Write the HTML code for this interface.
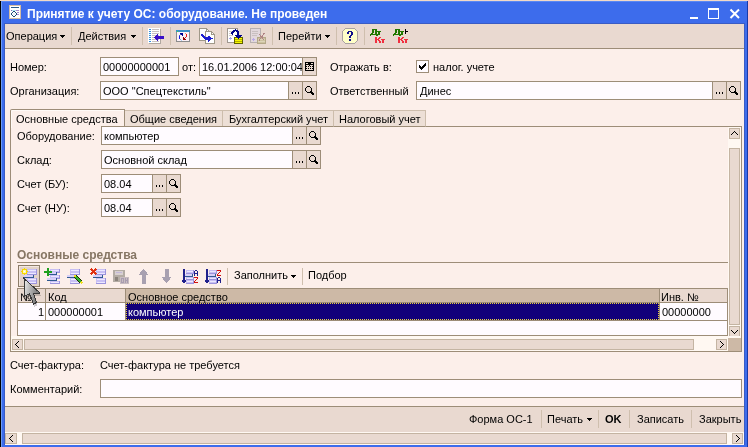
<!DOCTYPE html>
<html><head><meta charset="utf-8">
<style>
*{box-sizing:border-box;margin:0;padding:0}
html,body{width:748px;height:447px;overflow:hidden;background:#3d6cec}
body{position:relative;font:11px "Liberation Sans",sans-serif;color:#000}
.a{position:absolute}
.t{will-change:transform;position:absolute;white-space:nowrap;line-height:13px;height:13px}
.inp{position:absolute;background:#fffbff;border:1px solid #9d8d78}
.btn{position:absolute;background:#e9d9d0;border:1px solid #9d8d78}
.sb{position:absolute;background:#e9d9d0;border:1px solid #c4b4a2}
.sep{position:absolute;width:1px;background:#cfbfae}
.dots{position:absolute;left:3px;top:9px;width:9px;height:2px;background:
 linear-gradient(90deg,#000 0 2px,transparent 2px 3.5px,#000 3.5px 5.5px,transparent 5.5px 7px,#000 7px 9px)}
</style></head><body>
<!-- window frame -->
<div class="a" style="left:0;top:0;width:748px;height:1px;background:#f3d9c6"></div>
<div class="a" style="left:0;top:1px;width:1px;height:446px;background:#000"></div>
<div class="a" style="left:1px;top:1px;width:1px;height:446px;background:#6e9cf2"></div>
<div class="a" style="left:1px;top:1px;width:746px;height:1px;background:#5a88f4"></div>
<div class="a" style="left:747px;top:1px;width:1px;height:446px;background:#1a3aa8"></div>
<!-- title -->
<div class="t" style="left:27px;top:7px;font-weight:bold;font-size:12px;color:#fff;line-height:15px;height:15px">Принятие к учету ОС: оборудование. Не проведен</div>
<div class="a" style="left:690px;top:17px;width:8px;height:2px;background:#fff"></div>
<div class="a" style="left:708px;top:8px;width:11px;height:11px;border:1px solid #fff;border-top-width:2px"></div>
<svg class="a" style="left:729px;top:8px" width="12" height="12"><path d="M1.5 1.5L10 10M10 1.5L1.5 10" stroke="#fff" stroke-width="2"/></svg>
<!-- content -->
<div class="a" style="left:4px;top:23px;width:741px;height:422px;background:#3a5cc4"></div>
<div class="a" style="left:5px;top:24px;width:739px;height:421px;background:#fcefea"></div>
<!-- toolbar -->
<div class="a" style="left:5px;top:24px;width:739px;height:25px;background:#e9d9d0;border-bottom:1px solid #9d8d78"></div>
<div class="t" style="left:6px;top:30px">Операция</div>
<div class="t" style="left:78px;top:30px">Действия</div>
<div class="t" style="left:278px;top:30px">Перейти</div>
<div class="sep" style="left:71px;top:27px;height:18px"></div>
<div class="sep" style="left:142px;top:27px;height:18px"></div>
<div class="sep" style="left:170px;top:27px;height:18px"></div>
<div class="sep" style="left:221px;top:27px;height:18px"></div>
<div class="sep" style="left:272px;top:27px;height:18px"></div>
<div class="sep" style="left:336px;top:27px;height:18px"></div>
<div class="sep" style="left:364px;top:27px;height:18px"></div>

<!-- form rows -->
<div class="t" style="left:10px;top:61px">Номер:</div>
<div class="inp" style="left:100px;top:57px;width:79px;height:19px"></div>
<div class="t" style="left:103px;top:61px">00000000001</div>
<div class="t" style="left:182px;top:61px">от:</div>
<div class="inp" style="left:199px;top:57px;width:118px;height:19px;overflow:hidden"><div class="t" style="left:2px;top:3px">16.01.2006 12:00:04</div></div>
<div class="btn" style="left:302px;top:57px;width:15px;height:19px"></div>
<div class="t" style="left:330px;top:61px">Отражать в:</div>
<div class="inp" style="left:416px;top:60px;width:13px;height:13px"></div>
<div class="t" style="left:433px;top:61px">налог. учете</div>

<div class="t" style="left:10px;top:85px">Организация:</div>
<div class="inp" style="left:100px;top:81px;width:217px;height:19px"></div>
<div class="t" style="left:103px;top:85px">ООО "Спецтекстиль"</div>
<div class="btn" style="left:288px;top:81px;width:15px;height:19px"></div>
<div class="btn" style="left:302px;top:81px;width:15px;height:19px"></div>
<div class="t" style="left:330px;top:85px">Ответственный</div>
<div class="inp" style="left:416px;top:81px;width:325px;height:19px"></div>
<div class="t" style="left:420px;top:85px">Динес</div>
<div class="btn" style="left:712px;top:81px;width:15px;height:19px"></div>
<div class="btn" style="left:726px;top:81px;width:15px;height:19px"></div>

<!-- tabs -->
<div class="a" style="left:10px;top:126px;width:732px;height:226px;border:1px solid #9d8d78"></div>
<div class="a" style="left:124px;top:110px;width:99px;height:17px;background:#eddfd6;border:1px solid #cdbdac;border-bottom-color:#9d8d78"></div>
<div class="a" style="left:222px;top:110px;width:112px;height:17px;background:#eddfd6;border:1px solid #cdbdac;border-bottom-color:#9d8d78"></div>
<div class="a" style="left:333px;top:110px;width:93px;height:17px;background:#eddfd6;border:1px solid #cdbdac;border-bottom-color:#9d8d78"></div>
<div class="a" style="left:10px;top:109px;width:115px;height:19px;background:#fcefea;border:1px solid #9d8d78;border-bottom:none;border-top-left-radius:2px;box-shadow:inset 1px 1px 0 #fffaf7"></div>
<div class="t" style="left:16px;top:113px">Основные средства</div>
<div class="t" style="left:130px;top:113px">Общие сведения</div>
<div class="t" style="left:229px;top:113px">Бухгалтерский учет</div>
<div class="t" style="left:339px;top:113px">Налоговый учет</div>

<div class="t" style="left:17px;top:130px">Оборудование:</div>
<div class="inp" style="left:101px;top:126px;width:220px;height:19px"></div>
<div class="t" style="left:104px;top:130px">компьютер</div>
<div class="btn" style="left:292px;top:126px;width:15px;height:19px"></div>
<div class="btn" style="left:306px;top:126px;width:15px;height:19px"></div>

<div class="t" style="left:17px;top:154px">Склад:</div>
<div class="inp" style="left:101px;top:150px;width:220px;height:19px"></div>
<div class="t" style="left:104px;top:154px">Основной склад</div>
<div class="btn" style="left:292px;top:150px;width:15px;height:19px"></div>
<div class="btn" style="left:306px;top:150px;width:15px;height:19px"></div>

<div class="t" style="left:17px;top:178px">Счет (БУ):</div>
<div class="inp" style="left:101px;top:174px;width:80px;height:19px"></div>
<div class="t" style="left:104px;top:178px">08.04</div>
<div class="btn" style="left:152px;top:174px;width:15px;height:19px"></div>
<div class="btn" style="left:166px;top:174px;width:15px;height:19px"></div>

<div class="t" style="left:17px;top:202px">Счет (НУ):</div>
<div class="inp" style="left:101px;top:198px;width:80px;height:19px"></div>
<div class="t" style="left:104px;top:202px">08.04</div>
<div class="btn" style="left:152px;top:198px;width:15px;height:19px"></div>
<div class="btn" style="left:166px;top:198px;width:15px;height:19px"></div>

<div class="t" style="left:17px;top:249px;font-weight:bold;font-size:12px;color:#867664">Основные средства</div>
<div class="a" style="left:17px;top:262px;width:711px;height:1px;background:#9d8d78"></div>

<!-- grid toolbar -->
<div class="a" style="left:18px;top:265px;width:22px;height:22px;background:#e3d3c9;border:1px solid #8c7c68;box-shadow:inset 1px 1px 0 #f4e8e0"></div>
<div class="sep" style="left:227px;top:268px;height:17px"></div>
<div class="sep" style="left:302px;top:268px;height:17px"></div>
<div class="t" style="left:234px;top:269px">Заполнить</div>
<div class="t" style="left:308px;top:269px">Подбор</div>

<!-- grid -->
<div class="a" style="left:17px;top:288px;width:711px;height:48px;background:#fffbff;border:1px solid #9d8d78"></div>
<div class="a" style="left:18px;top:289px;width:709px;height:14px;background:#e9d9d0;border-bottom:1px solid #9d8d78"></div>
<div class="a" style="left:126px;top:289px;width:533px;height:14px;background:#cdb9a6;border-bottom:1px solid #9d8d78"></div>
<div class="a" style="left:45px;top:289px;width:1px;height:31px;background:#9d8d78"></div>
<div class="a" style="left:125px;top:289px;width:1px;height:31px;background:#9d8d78"></div>
<div class="a" style="left:659px;top:289px;width:1px;height:31px;background:#9d8d78"></div>
<div class="a" style="left:18px;top:320px;width:709px;height:1px;background:#9d8d78"></div>
<div class="a" style="left:126px;top:303px;width:533px;height:17px;background:#12007a;border:1px dotted #e8d040"></div>
<div class="t" style="left:20px;top:291px">№</div>
<div class="t" style="left:48px;top:291px">Код</div>
<div class="t" style="left:128px;top:291px">Основное средство</div>
<div class="t" style="left:661px;top:291px">Инв. №</div>
<div class="t" style="left:38px;top:306px">1</div>
<div class="t" style="left:48px;top:306px">000000001</div>
<div class="t" style="left:128px;top:306px;color:#fff">компьютер</div>
<div class="t" style="left:662px;top:306px">00000000</div>

<!-- panel scrollbars -->
<div class="a" style="left:728px;top:127px;width:13px;height:224px;background:#fff8f2"></div>
<div class="sb" style="left:729px;top:128px;width:11px;height:11px"></div>
<div class="sb" style="left:729px;top:148px;width:11px;height:177px"></div>
<div class="sb" style="left:729px;top:326px;width:11px;height:11px"></div>
<div class="a" style="left:11px;top:336px;width:730px;height:15px;background:#fff8f2"></div>
<div class="sb" style="left:12px;top:339px;width:11px;height:11px"></div>
<div class="sb" style="left:24px;top:339px;width:670px;height:11px"></div>
<div class="sb" style="left:716px;top:339px;width:11px;height:11px"></div>
<div class="a" style="left:728px;top:338px;width:13px;height:13px;background:#cdb9a6"></div>

<!-- bottom -->
<div class="t" style="left:10px;top:359px">Счет-фактура:</div>
<div class="t" style="left:100px;top:359px">Счет-фактура не требуется</div>
<div class="t" style="left:10px;top:383px">Комментарий:</div>
<div class="inp" style="left:100px;top:379px;width:642px;height:19px"></div>

<div class="a" style="left:5px;top:406px;width:739px;height:39px;background:#e9d9d0;border-top:1px solid #9d8d78"></div>
<div class="t" style="left:469px;top:413px">Форма ОС-1</div>
<div class="t" style="left:547px;top:413px">Печать</div>
<div class="t" style="left:605px;top:413px;font-weight:bold">OK</div>
<div class="t" style="left:637px;top:413px">Записать</div>
<div class="t" style="left:699px;top:413px">Закрыть</div>
<div class="sep" style="left:541px;top:410px;height:18px"></div>
<div class="sep" style="left:598px;top:410px;height:18px"></div>
<div class="sep" style="left:629px;top:410px;height:18px"></div>
<div class="sep" style="left:691px;top:410px;height:18px"></div>
<div class="a" style="left:5px;top:432px;width:739px;height:13px;background:#fff8f2"></div>
<div class="sb" style="left:5px;top:433px;width:12px;height:11px"></div>
<div class="sb" style="left:22px;top:433px;width:705px;height:11px"></div>
<div class="sb" style="left:732px;top:433px;width:11px;height:11px"></div>
<!-- ICONS -->
<svg class="a" style="left:0;top:0" width="748" height="447" viewBox="0 0 748 447">
<g shape-rendering="crispEdges">
<!-- title icon -->
<g shape-rendering="crispEdges">
<rect x="9" y="5" width="12" height="14" fill="#d4bca4"/>
<rect x="10" y="6" width="10" height="12" fill="#fff"/>
<rect x="11" y="7" width="8" height="1" fill="#2a5a8a"/>
<rect x="11" y="10" width="1" height="1" fill="#8060c0"/>
<rect x="12" y="10" width="4" height="1" fill="#b0e8f0"/>
<rect x="16" y="10" width="3" height="1" fill="#a888d0"/>
<rect x="17" y="12" width="2" height="1" fill="#a888d0"/>
<rect x="17" y="14" width="2" height="1" fill="#a888d0"/>
<rect x="13" y="13" width="2" height="2" fill="#e8f0f8"/>
<rect x="13" y="11" width="1" height="1" fill="#1e4a7a"/><rect x="14" y="11" width="1" height="1" fill="#1e4a7a"/><rect x="12" y="12" width="1" height="1" fill="#1e4a7a"/><rect x="15" y="12" width="1" height="1" fill="#1e4a7a"/><rect x="11" y="13" width="1" height="1" fill="#1e4a7a"/><rect x="16" y="13" width="1" height="1" fill="#1e4a7a"/><rect x="11" y="14" width="1" height="1" fill="#1e4a7a"/><rect x="16" y="14" width="1" height="1" fill="#1e4a7a"/><rect x="12" y="15" width="1" height="1" fill="#1e4a7a"/><rect x="15" y="15" width="1" height="1" fill="#1e4a7a"/><rect x="13" y="16" width="1" height="1" fill="#1e4a7a"/><rect x="14" y="16" width="1" height="1" fill="#1e4a7a"/>
</g>
<!-- dropdown arrows -->
<g fill="#000" shape-rendering="crispEdges">
<path d="M60 35h5v1h-1v1h-1v1h-1v-1h-1v-1h-1z"/>
<path d="M131 35h5v1h-1v1h-1v1h-1v-1h-1v-1h-1z"/>
<path d="M325 35h5v1h-1v1h-1v1h-1v-1h-1v-1h-1z"/>
<path d="M291 275h5v1h-1v1h-1v1h-1v-1h-1v-1h-1z"/>
<path d="M587 418h5v1h-1v1h-1v1h-1v-1h-1v-1h-1z"/>
</g>

<!-- toolbar icon 1: doc with left arrow -->
<g shape-rendering="crispEdges">
<rect x="149" y="29" width="12" height="15" fill="#b0a8a0"/>
<rect x="148" y="28" width="12" height="15" fill="#fff"/>
<g fill="#3090e0"><rect x="149" y="29" width="2" height="1"/><rect x="149" y="31" width="2" height="1"/><rect x="149" y="33" width="2" height="1"/><rect x="149" y="35" width="2" height="1"/><rect x="149" y="37" width="2" height="1"/><rect x="149" y="39" width="2" height="1"/><rect x="149" y="41" width="2" height="1"/></g>
<g fill="#c8c0c0"><rect x="152" y="29" width="7" height="1"/><rect x="152" y="31" width="7" height="1"/><rect x="152" y="33" width="7" height="1"/><rect x="152" y="35" width="7" height="1"/><rect x="152" y="37" width="7" height="1"/><rect x="152" y="39" width="7" height="1"/><rect x="152" y="41" width="7" height="1"/></g>
</g>
<path d="M153.5 37.5 L158 33.5 V36 H164 V39.3 H158 V41.5 Z" fill="#3a10c8"/>

<!-- toolbar icon 2: refresh window -->
<g shape-rendering="crispEdges">
<rect x="176" y="30" width="14" height="12" fill="#8c8c8c"/>
<rect x="177" y="32" width="12" height="9" fill="#fbf0f6"/>
<rect x="176" y="30" width="14" height="2" fill="#3c90c8"/>
<rect x="177" y="31" width="1" height="1" fill="#40e040"/>
<rect x="180" y="33" width="1" height="1" fill="#000090"/><rect x="181" y="33" width="1" height="1" fill="#000090"/><rect x="182" y="33" width="1" height="1" fill="#000090"/><rect x="181" y="34" width="1" height="1" fill="#000090"/><rect x="182" y="34" width="1" height="1" fill="#000090"/><rect x="182" y="35" width="1" height="1" fill="#000090"/><rect x="180" y="34" width="1" height="1" fill="#4060b0"/><rect x="179" y="35" width="1" height="1" fill="#4070c0"/><rect x="179" y="36" width="1" height="1" fill="#1818e8"/><rect x="179" y="37" width="1" height="1" fill="#1818e8"/><rect x="179" y="38" width="1" height="1" fill="#1818e8"/><rect x="180" y="39" width="1" height="1" fill="#60a8d8"/><rect x="181" y="40" width="1" height="1" fill="#b0d0f0"/><rect x="185" y="33" width="1" height="1" fill="#f0a070"/><rect x="186" y="34" width="1" height="1" fill="#f01818"/><rect x="186" y="35" width="1" height="1" fill="#f01818"/><rect x="186" y="36" width="1" height="1" fill="#f01818"/><rect x="185" y="37" width="1" height="1" fill="#b03030"/><rect x="183" y="37" width="1" height="1" fill="#900000"/><rect x="183" y="38" width="1" height="1" fill="#900000"/><rect x="183" y="39" width="1" height="1" fill="#900000"/><rect x="184" y="38" width="1" height="1" fill="#900000"/><rect x="184" y="39" width="1" height="1" fill="#900000"/><rect x="185" y="39" width="1" height="1" fill="#900000"/>
</g>
<!-- toolbar icon 3: two docs -->
<path d="M199.5 28.5 H206.5 L209.5 31.5 V40.5 H199.5 Z" fill="#fff" stroke="#a09888"/>
<path d="M206.5 28.5 V31.5 H209.5" fill="none" stroke="#a09888"/>
<path d="M205.5 31.5 H211.5 L214.5 34.5 V43.5 H205.5 Z" fill="#fff" stroke="#a09888"/>
<path d="M211.5 31.5 V34.5 H214.5" fill="none" stroke="#a09888"/>
<g fill="#2020d0" shape-rendering="crispEdges"><rect x="201" y="34" width="2" height="1"/><rect x="201" y="35" width="3" height="1"/><rect x="202" y="36" width="3" height="1"/><rect x="208" y="36" width="2" height="1"/><rect x="203" y="37" width="8" height="1"/><rect x="204" y="38" width="9" height="1"/><rect x="205" y="39" width="6" height="1"/><rect x="208" y="40" width="2" height="1"/><rect x="208" y="41" width="1" height="1"/></g>
<!-- toolbar icon 4: doc + arrow + yellow box -->
<g shape-rendering="crispEdges">
<rect x="227" y="28" width="11" height="15" fill="#a09890"/>
<rect x="228" y="29" width="9" height="13" fill="#fff"/>
<rect x="229" y="31" width="5" height="1" fill="#d0c8c8"/><rect x="229" y="33" width="3" height="1" fill="#d0c8c8"/><rect x="229" y="35" width="4" height="1" fill="#d0c8c8"/>
<rect x="230" y="37" width="1" height="2" fill="#a8a0f0"/><rect x="229" y="38" width="3" height="1" fill="#a8a0f0"/><rect x="230" y="39" width="1" height="1" fill="#c8c0f8"/>
<rect x="234" y="37" width="9" height="7" fill="#606000"/>
<rect x="235" y="38" width="7" height="1" fill="#f8f800"/><rect x="235" y="40" width="7" height="1" fill="#f8f800"/><rect x="235" y="42" width="7" height="1" fill="#f8f800"/>
<rect x="235" y="39" width="7" height="1" fill="#b0b000"/><rect x="235" y="41" width="7" height="1" fill="#b0b000"/>
</g>
<path d="M231.5 34.5 Q233 30 236 30.5 Q238.5 31 238.5 35" fill="none" stroke="#00008c" stroke-width="2"/>
<path d="M235 35 H242 L238.5 39 Z" fill="#00008c"/>
<!-- toolbar icon 5: disabled -->
<g shape-rendering="crispEdges">
<rect x="250" y="28" width="11" height="15" fill="#b8b0b0"/>
<rect x="251" y="29" width="9" height="13" fill="#e2d8dc"/>
<rect x="252" y="31" width="6" height="1" fill="#c8c0c0"/><rect x="252" y="33" width="6" height="1" fill="#c8c0c0"/><rect x="252" y="35" width="5" height="1" fill="#c8c0c0"/>
<rect x="253" y="38" width="1" height="3" fill="#b8a8e8"/><rect x="252" y="39" width="3" height="1" fill="#b8a8e8"/>
<rect x="257" y="37" width="9" height="7" fill="#b4a888"/>
<rect x="258" y="38" width="7" height="5" fill="#cdc2a0"/>
<rect x="258" y="39" width="7" height="1" fill="#dcd4b8"/><rect x="258" y="41" width="7" height="1" fill="#dcd4b8"/>
</g>
<path d="M259 34 L264 40 M264.5 33 L259 40.5" stroke="#b08484" stroke-width="1.1"/>
<!-- help -->
<path d="M345.5 28.5 H354.5 L357.5 31.5 V40.5 L354.5 43.5 H345.5 L342.5 40.5 V31.5 Z" fill="#ffffc8" stroke="#aaa2a2"/>
<g fill="#10108c" shape-rendering="crispEdges"><rect x="348" y="31" width="1" height="1"/><rect x="349" y="31" width="1" height="1"/><rect x="350" y="31" width="1" height="1"/><rect x="351" y="31" width="1" height="1"/><rect x="347" y="32" width="1" height="1"/><rect x="348" y="32" width="1" height="1"/><rect x="351" y="32" width="1" height="1"/><rect x="352" y="32" width="1" height="1"/><rect x="347" y="33" width="1" height="1"/><rect x="348" y="33" width="1" height="1"/><rect x="351" y="33" width="1" height="1"/><rect x="352" y="33" width="1" height="1"/><rect x="351" y="34" width="1" height="1"/><rect x="352" y="34" width="1" height="1"/><rect x="350" y="35" width="1" height="1"/><rect x="351" y="35" width="1" height="1"/><rect x="349" y="36" width="1" height="1"/><rect x="350" y="36" width="1" height="1"/><rect x="349" y="37" width="1" height="1"/><rect x="350" y="37" width="1" height="1"/><rect x="349" y="39" width="1" height="1"/><rect x="350" y="39" width="1" height="1"/><rect x="349" y="40" width="1" height="1"/><rect x="350" y="40" width="1" height="1"/></g>
<!-- Dt Kt -->
<g fill="#207800" shape-rendering="crispEdges"><rect x="372" y="29" width="1" height="1"/><rect x="373" y="29" width="1" height="1"/><rect x="374" y="29" width="1" height="1"/><rect x="375" y="29" width="1" height="1"/><rect x="376" y="29" width="1" height="1"/><rect x="372" y="30" width="1" height="1"/><rect x="373" y="30" width="1" height="1"/><rect x="375" y="30" width="1" height="1"/><rect x="376" y="30" width="1" height="1"/><rect x="372" y="31" width="1" height="1"/><rect x="373" y="31" width="1" height="1"/><rect x="375" y="31" width="1" height="1"/><rect x="376" y="31" width="1" height="1"/><rect x="372" y="32" width="1" height="1"/><rect x="373" y="32" width="1" height="1"/><rect x="375" y="32" width="1" height="1"/><rect x="376" y="32" width="1" height="1"/><rect x="371" y="33" width="1" height="1"/><rect x="372" y="33" width="1" height="1"/><rect x="375" y="33" width="1" height="1"/><rect x="376" y="33" width="1" height="1"/><rect x="370" y="34" width="1" height="1"/><rect x="371" y="34" width="1" height="1"/><rect x="372" y="34" width="1" height="1"/><rect x="373" y="34" width="1" height="1"/><rect x="374" y="34" width="1" height="1"/><rect x="375" y="34" width="1" height="1"/><rect x="376" y="34" width="1" height="1"/><rect x="377" y="34" width="1" height="1"/><rect x="370" y="35" width="1" height="1"/><rect x="376" y="35" width="1" height="1"/><rect x="377" y="35" width="1" height="1"/></g><g fill="#207800" shape-rendering="crispEdges"><rect x="377" y="31" width="1" height="1"/><rect x="378" y="31" width="1" height="1"/><rect x="379" y="31" width="1" height="1"/><rect x="380" y="31" width="1" height="1"/><rect x="378" y="32" width="1" height="1"/><rect x="379" y="32" width="1" height="1"/><rect x="378" y="33" width="1" height="1"/><rect x="379" y="33" width="1" height="1"/><rect x="378" y="34" width="1" height="1"/><rect x="379" y="34" width="1" height="1"/></g><g fill="#f03040" shape-rendering="crispEdges"><rect x="375" y="37" width="1" height="1"/><rect x="376" y="37" width="1" height="1"/><rect x="379" y="37" width="1" height="1"/><rect x="380" y="37" width="1" height="1"/><rect x="375" y="38" width="1" height="1"/><rect x="376" y="38" width="1" height="1"/><rect x="378" y="38" width="1" height="1"/><rect x="379" y="38" width="1" height="1"/><rect x="375" y="39" width="1" height="1"/><rect x="376" y="39" width="1" height="1"/><rect x="377" y="39" width="1" height="1"/><rect x="378" y="39" width="1" height="1"/><rect x="375" y="40" width="1" height="1"/><rect x="376" y="40" width="1" height="1"/><rect x="378" y="40" width="1" height="1"/><rect x="379" y="40" width="1" height="1"/><rect x="375" y="41" width="1" height="1"/><rect x="376" y="41" width="1" height="1"/><rect x="379" y="41" width="1" height="1"/><rect x="380" y="41" width="1" height="1"/><rect x="375" y="42" width="1" height="1"/><rect x="376" y="42" width="1" height="1"/><rect x="379" y="42" width="1" height="1"/><rect x="380" y="42" width="1" height="1"/></g><g fill="#f03040" shape-rendering="crispEdges"><rect x="381" y="39" width="1" height="1"/><rect x="382" y="39" width="1" height="1"/><rect x="383" y="39" width="1" height="1"/><rect x="384" y="39" width="1" height="1"/><rect x="382" y="40" width="1" height="1"/><rect x="383" y="40" width="1" height="1"/><rect x="382" y="41" width="1" height="1"/><rect x="383" y="41" width="1" height="1"/><rect x="382" y="42" width="1" height="1"/><rect x="383" y="42" width="1" height="1"/></g>
<g fill="#207800" shape-rendering="crispEdges"><rect x="395" y="29" width="1" height="1"/><rect x="396" y="29" width="1" height="1"/><rect x="397" y="29" width="1" height="1"/><rect x="398" y="29" width="1" height="1"/><rect x="399" y="29" width="1" height="1"/><rect x="395" y="30" width="1" height="1"/><rect x="396" y="30" width="1" height="1"/><rect x="398" y="30" width="1" height="1"/><rect x="399" y="30" width="1" height="1"/><rect x="395" y="31" width="1" height="1"/><rect x="396" y="31" width="1" height="1"/><rect x="398" y="31" width="1" height="1"/><rect x="399" y="31" width="1" height="1"/><rect x="395" y="32" width="1" height="1"/><rect x="396" y="32" width="1" height="1"/><rect x="398" y="32" width="1" height="1"/><rect x="399" y="32" width="1" height="1"/><rect x="394" y="33" width="1" height="1"/><rect x="395" y="33" width="1" height="1"/><rect x="398" y="33" width="1" height="1"/><rect x="399" y="33" width="1" height="1"/><rect x="393" y="34" width="1" height="1"/><rect x="394" y="34" width="1" height="1"/><rect x="395" y="34" width="1" height="1"/><rect x="396" y="34" width="1" height="1"/><rect x="397" y="34" width="1" height="1"/><rect x="398" y="34" width="1" height="1"/><rect x="399" y="34" width="1" height="1"/><rect x="400" y="34" width="1" height="1"/><rect x="393" y="35" width="1" height="1"/><rect x="399" y="35" width="1" height="1"/><rect x="400" y="35" width="1" height="1"/></g><g fill="#207800" shape-rendering="crispEdges"><rect x="400" y="31" width="1" height="1"/><rect x="401" y="31" width="1" height="1"/><rect x="402" y="31" width="1" height="1"/><rect x="403" y="31" width="1" height="1"/><rect x="401" y="32" width="1" height="1"/><rect x="402" y="32" width="1" height="1"/><rect x="401" y="33" width="1" height="1"/><rect x="402" y="33" width="1" height="1"/><rect x="401" y="34" width="1" height="1"/><rect x="402" y="34" width="1" height="1"/></g><g fill="#f03040" shape-rendering="crispEdges"><rect x="398" y="37" width="1" height="1"/><rect x="399" y="37" width="1" height="1"/><rect x="402" y="37" width="1" height="1"/><rect x="403" y="37" width="1" height="1"/><rect x="398" y="38" width="1" height="1"/><rect x="399" y="38" width="1" height="1"/><rect x="401" y="38" width="1" height="1"/><rect x="402" y="38" width="1" height="1"/><rect x="398" y="39" width="1" height="1"/><rect x="399" y="39" width="1" height="1"/><rect x="400" y="39" width="1" height="1"/><rect x="401" y="39" width="1" height="1"/><rect x="398" y="40" width="1" height="1"/><rect x="399" y="40" width="1" height="1"/><rect x="401" y="40" width="1" height="1"/><rect x="402" y="40" width="1" height="1"/><rect x="398" y="41" width="1" height="1"/><rect x="399" y="41" width="1" height="1"/><rect x="402" y="41" width="1" height="1"/><rect x="403" y="41" width="1" height="1"/><rect x="398" y="42" width="1" height="1"/><rect x="399" y="42" width="1" height="1"/><rect x="402" y="42" width="1" height="1"/><rect x="403" y="42" width="1" height="1"/></g><g fill="#f03040" shape-rendering="crispEdges"><rect x="404" y="39" width="1" height="1"/><rect x="405" y="39" width="1" height="1"/><rect x="406" y="39" width="1" height="1"/><rect x="407" y="39" width="1" height="1"/><rect x="405" y="40" width="1" height="1"/><rect x="406" y="40" width="1" height="1"/><rect x="405" y="41" width="1" height="1"/><rect x="406" y="41" width="1" height="1"/><rect x="405" y="42" width="1" height="1"/><rect x="406" y="42" width="1" height="1"/></g>
<g fill="#000" shape-rendering="crispEdges"><rect x="405" y="29" width="1" height="1"/><rect x="405" y="30" width="1" height="1"/><rect x="405" y="31" width="1" height="1"/><rect x="406" y="31" width="1" height="1"/><rect x="407" y="31" width="1" height="1"/><rect x="405" y="32" width="1" height="1"/><rect x="405" y="33" width="1" height="1"/></g>
<!-- calendar -->
<g fill="#000" shape-rendering="crispEdges"><rect x="305" y="62" width="1" height="1"/><rect x="306" y="62" width="1" height="1"/><rect x="307" y="62" width="1" height="1"/><rect x="308" y="62" width="1" height="1"/><rect x="309" y="62" width="1" height="1"/><rect x="310" y="62" width="1" height="1"/><rect x="311" y="62" width="1" height="1"/><rect x="312" y="62" width="1" height="1"/><rect x="313" y="62" width="1" height="1"/><rect x="305" y="63" width="1" height="1"/><rect x="308" y="63" width="1" height="1"/><rect x="309" y="63" width="1" height="1"/><rect x="310" y="63" width="1" height="1"/><rect x="313" y="63" width="1" height="1"/><rect x="305" y="64" width="1" height="1"/><rect x="306" y="64" width="1" height="1"/><rect x="307" y="64" width="1" height="1"/><rect x="308" y="64" width="1" height="1"/><rect x="309" y="64" width="1" height="1"/><rect x="310" y="64" width="1" height="1"/><rect x="311" y="64" width="1" height="1"/><rect x="312" y="64" width="1" height="1"/><rect x="313" y="64" width="1" height="1"/><rect x="305" y="65" width="1" height="1"/><rect x="309" y="65" width="1" height="1"/><rect x="313" y="65" width="1" height="1"/><rect x="305" y="66" width="1" height="1"/><rect x="306" y="66" width="1" height="1"/><rect x="308" y="66" width="1" height="1"/><rect x="310" y="66" width="1" height="1"/><rect x="312" y="66" width="1" height="1"/><rect x="313" y="66" width="1" height="1"/><rect x="305" y="67" width="1" height="1"/><rect x="313" y="67" width="1" height="1"/><rect x="305" y="68" width="1" height="1"/><rect x="306" y="68" width="1" height="1"/><rect x="308" y="68" width="1" height="1"/><rect x="310" y="68" width="1" height="1"/><rect x="312" y="68" width="1" height="1"/><rect x="313" y="68" width="1" height="1"/><rect x="305" y="69" width="1" height="1"/><rect x="313" y="69" width="1" height="1"/><rect x="305" y="70" width="1" height="1"/><rect x="306" y="70" width="1" height="1"/><rect x="307" y="70" width="1" height="1"/><rect x="308" y="70" width="1" height="1"/><rect x="309" y="70" width="1" height="1"/><rect x="310" y="70" width="1" height="1"/><rect x="311" y="70" width="1" height="1"/><rect x="312" y="70" width="1" height="1"/><rect x="313" y="70" width="1" height="1"/></g>


<g fill="#000" shape-rendering="crispEdges"><rect x="425" y="63" width="1" height="1"/><rect x="424" y="64" width="1" height="1"/><rect x="425" y="64" width="1" height="1"/><rect x="419" y="65" width="1" height="1"/><rect x="423" y="65" width="1" height="1"/><rect x="424" y="65" width="1" height="1"/><rect x="425" y="65" width="1" height="1"/><rect x="419" y="66" width="1" height="1"/><rect x="420" y="66" width="1" height="1"/><rect x="422" y="66" width="1" height="1"/><rect x="423" y="66" width="1" height="1"/><rect x="424" y="66" width="1" height="1"/><rect x="419" y="67" width="1" height="1"/><rect x="420" y="67" width="1" height="1"/><rect x="421" y="67" width="1" height="1"/><rect x="422" y="67" width="1" height="1"/><rect x="423" y="67" width="1" height="1"/><rect x="420" y="68" width="1" height="1"/><rect x="421" y="68" width="1" height="1"/><rect x="422" y="68" width="1" height="1"/><rect x="421" y="69" width="1" height="1"/></g>
<g fill="#000" shape-rendering="crispEdges"><rect x="292" y="92" width="1" height="2"/><rect x="295" y="92" width="1" height="2"/><rect x="298" y="92" width="1" height="2"/><rect x="716" y="92" width="1" height="2"/><rect x="719" y="92" width="1" height="2"/><rect x="722" y="92" width="1" height="2"/><rect x="296" y="137" width="1" height="2"/><rect x="299" y="137" width="1" height="2"/><rect x="302" y="137" width="1" height="2"/><rect x="296" y="161" width="1" height="2"/><rect x="299" y="161" width="1" height="2"/><rect x="302" y="161" width="1" height="2"/><rect x="156" y="185" width="1" height="2"/><rect x="159" y="185" width="1" height="2"/><rect x="162" y="185" width="1" height="2"/><rect x="156" y="209" width="1" height="2"/><rect x="159" y="209" width="1" height="2"/><rect x="162" y="209" width="1" height="2"/></g>
<g fill="#000" shape-rendering="crispEdges"><rect x="307" y="86" width="1" height="1"/><rect x="308" y="86" width="1" height="1"/><rect x="309" y="86" width="1" height="1"/><rect x="306" y="87" width="1" height="1"/><rect x="310" y="87" width="1" height="1"/><rect x="305" y="88" width="1" height="1"/><rect x="311" y="88" width="1" height="1"/><rect x="305" y="89" width="1" height="1"/><rect x="311" y="89" width="1" height="1"/><rect x="305" y="90" width="1" height="1"/><rect x="311" y="90" width="1" height="1"/><rect x="306" y="91" width="1" height="1"/><rect x="310" y="91" width="1" height="1"/><rect x="311" y="91" width="1" height="1"/><rect x="307" y="92" width="1" height="1"/><rect x="308" y="92" width="1" height="1"/><rect x="309" y="92" width="1" height="1"/><rect x="310" y="92" width="1" height="1"/><rect x="311" y="92" width="1" height="1"/><rect x="312" y="92" width="1" height="1"/><rect x="311" y="93" width="1" height="1"/><rect x="312" y="93" width="1" height="1"/><rect x="313" y="93" width="1" height="1"/><rect x="312" y="94" width="1" height="1"/><rect x="313" y="94" width="1" height="1"/><rect x="731" y="86" width="1" height="1"/><rect x="732" y="86" width="1" height="1"/><rect x="733" y="86" width="1" height="1"/><rect x="730" y="87" width="1" height="1"/><rect x="734" y="87" width="1" height="1"/><rect x="729" y="88" width="1" height="1"/><rect x="735" y="88" width="1" height="1"/><rect x="729" y="89" width="1" height="1"/><rect x="735" y="89" width="1" height="1"/><rect x="729" y="90" width="1" height="1"/><rect x="735" y="90" width="1" height="1"/><rect x="730" y="91" width="1" height="1"/><rect x="734" y="91" width="1" height="1"/><rect x="735" y="91" width="1" height="1"/><rect x="731" y="92" width="1" height="1"/><rect x="732" y="92" width="1" height="1"/><rect x="733" y="92" width="1" height="1"/><rect x="734" y="92" width="1" height="1"/><rect x="735" y="92" width="1" height="1"/><rect x="736" y="92" width="1" height="1"/><rect x="735" y="93" width="1" height="1"/><rect x="736" y="93" width="1" height="1"/><rect x="737" y="93" width="1" height="1"/><rect x="736" y="94" width="1" height="1"/><rect x="737" y="94" width="1" height="1"/><rect x="311" y="131" width="1" height="1"/><rect x="312" y="131" width="1" height="1"/><rect x="313" y="131" width="1" height="1"/><rect x="310" y="132" width="1" height="1"/><rect x="314" y="132" width="1" height="1"/><rect x="309" y="133" width="1" height="1"/><rect x="315" y="133" width="1" height="1"/><rect x="309" y="134" width="1" height="1"/><rect x="315" y="134" width="1" height="1"/><rect x="309" y="135" width="1" height="1"/><rect x="315" y="135" width="1" height="1"/><rect x="310" y="136" width="1" height="1"/><rect x="314" y="136" width="1" height="1"/><rect x="315" y="136" width="1" height="1"/><rect x="311" y="137" width="1" height="1"/><rect x="312" y="137" width="1" height="1"/><rect x="313" y="137" width="1" height="1"/><rect x="314" y="137" width="1" height="1"/><rect x="315" y="137" width="1" height="1"/><rect x="316" y="137" width="1" height="1"/><rect x="315" y="138" width="1" height="1"/><rect x="316" y="138" width="1" height="1"/><rect x="317" y="138" width="1" height="1"/><rect x="316" y="139" width="1" height="1"/><rect x="317" y="139" width="1" height="1"/><rect x="311" y="155" width="1" height="1"/><rect x="312" y="155" width="1" height="1"/><rect x="313" y="155" width="1" height="1"/><rect x="310" y="156" width="1" height="1"/><rect x="314" y="156" width="1" height="1"/><rect x="309" y="157" width="1" height="1"/><rect x="315" y="157" width="1" height="1"/><rect x="309" y="158" width="1" height="1"/><rect x="315" y="158" width="1" height="1"/><rect x="309" y="159" width="1" height="1"/><rect x="315" y="159" width="1" height="1"/><rect x="310" y="160" width="1" height="1"/><rect x="314" y="160" width="1" height="1"/><rect x="315" y="160" width="1" height="1"/><rect x="311" y="161" width="1" height="1"/><rect x="312" y="161" width="1" height="1"/><rect x="313" y="161" width="1" height="1"/><rect x="314" y="161" width="1" height="1"/><rect x="315" y="161" width="1" height="1"/><rect x="316" y="161" width="1" height="1"/><rect x="315" y="162" width="1" height="1"/><rect x="316" y="162" width="1" height="1"/><rect x="317" y="162" width="1" height="1"/><rect x="316" y="163" width="1" height="1"/><rect x="317" y="163" width="1" height="1"/><rect x="171" y="179" width="1" height="1"/><rect x="172" y="179" width="1" height="1"/><rect x="173" y="179" width="1" height="1"/><rect x="170" y="180" width="1" height="1"/><rect x="174" y="180" width="1" height="1"/><rect x="169" y="181" width="1" height="1"/><rect x="175" y="181" width="1" height="1"/><rect x="169" y="182" width="1" height="1"/><rect x="175" y="182" width="1" height="1"/><rect x="169" y="183" width="1" height="1"/><rect x="175" y="183" width="1" height="1"/><rect x="170" y="184" width="1" height="1"/><rect x="174" y="184" width="1" height="1"/><rect x="175" y="184" width="1" height="1"/><rect x="171" y="185" width="1" height="1"/><rect x="172" y="185" width="1" height="1"/><rect x="173" y="185" width="1" height="1"/><rect x="174" y="185" width="1" height="1"/><rect x="175" y="185" width="1" height="1"/><rect x="176" y="185" width="1" height="1"/><rect x="175" y="186" width="1" height="1"/><rect x="176" y="186" width="1" height="1"/><rect x="177" y="186" width="1" height="1"/><rect x="176" y="187" width="1" height="1"/><rect x="177" y="187" width="1" height="1"/><rect x="171" y="203" width="1" height="1"/><rect x="172" y="203" width="1" height="1"/><rect x="173" y="203" width="1" height="1"/><rect x="170" y="204" width="1" height="1"/><rect x="174" y="204" width="1" height="1"/><rect x="169" y="205" width="1" height="1"/><rect x="175" y="205" width="1" height="1"/><rect x="169" y="206" width="1" height="1"/><rect x="175" y="206" width="1" height="1"/><rect x="169" y="207" width="1" height="1"/><rect x="175" y="207" width="1" height="1"/><rect x="170" y="208" width="1" height="1"/><rect x="174" y="208" width="1" height="1"/><rect x="175" y="208" width="1" height="1"/><rect x="171" y="209" width="1" height="1"/><rect x="172" y="209" width="1" height="1"/><rect x="173" y="209" width="1" height="1"/><rect x="174" y="209" width="1" height="1"/><rect x="175" y="209" width="1" height="1"/><rect x="176" y="209" width="1" height="1"/><rect x="175" y="210" width="1" height="1"/><rect x="176" y="210" width="1" height="1"/><rect x="177" y="210" width="1" height="1"/><rect x="176" y="211" width="1" height="1"/><rect x="177" y="211" width="1" height="1"/></g>
<g shape-rendering="crispEdges"><rect x="27" y="269" width="10" height="6" fill="#9c94dc"/><rect x="27" y="269" width="9" height="5" fill="#c8c0f4"/><rect x="28" y="270" width="8" height="1" fill="#ece8ff"/><rect x="28" y="273" width="8" height="1" fill="#ece8ff"/><rect x="24" y="275" width="10" height="3" fill="#305a90"/><rect x="24" y="275" width="9" height="2" fill="#d8d0f8"/><rect x="27" y="278" width="10" height="6" fill="#9c94dc"/><rect x="27" y="278" width="9" height="5" fill="#c8c0f4"/><rect x="28" y="279" width="8" height="1" fill="#ece8ff"/><rect x="28" y="282" width="8" height="1" fill="#ece8ff"/><rect x="50" y="269" width="10" height="4" fill="#9c94dc"/><rect x="50" y="269" width="9" height="3" fill="#c8c0f4"/><rect x="51" y="270" width="8" height="1" fill="#ece8ff"/><rect x="47" y="272" width="10" height="3" fill="#305a90"/><rect x="47" y="272" width="9" height="2" fill="#d8d0f8"/><rect x="50" y="275" width="10" height="4" fill="#9c94dc"/><rect x="50" y="275" width="9" height="3" fill="#c8c0f4"/><rect x="51" y="276" width="8" height="1" fill="#ece8ff"/><rect x="47" y="278" width="10" height="3" fill="#305a90"/><rect x="47" y="278" width="9" height="2" fill="#d8d0f8"/><rect x="50" y="281" width="10" height="3" fill="#9c94dc"/><rect x="50" y="281" width="9" height="2" fill="#c8c0f4"/><rect x="51" y="282" width="8" height="1" fill="#ece8ff"/><rect x="47" y="268" width="2" height="8" fill="#20a020"/><rect x="44" y="271" width="8" height="2" fill="#20a020"/><rect x="70" y="269" width="10" height="6" fill="#9c94dc"/><rect x="70" y="269" width="9" height="5" fill="#c8c0f4"/><rect x="71" y="270" width="8" height="1" fill="#ece8ff"/><rect x="71" y="273" width="8" height="1" fill="#ece8ff"/><rect x="67" y="275" width="9" height="3" fill="#305a90"/><rect x="67" y="275" width="8" height="2" fill="#d8d0f8"/><rect x="70" y="278" width="10" height="6" fill="#9c94dc"/><rect x="70" y="278" width="9" height="5" fill="#c8c0f4"/><rect x="71" y="279" width="8" height="1" fill="#ece8ff"/><rect x="71" y="282" width="8" height="1" fill="#ece8ff"/><rect x="96" y="269" width="10" height="6" fill="#9c94dc"/><rect x="96" y="269" width="9" height="5" fill="#c8c0f4"/><rect x="97" y="270" width="8" height="1" fill="#ece8ff"/><rect x="97" y="273" width="8" height="1" fill="#ece8ff"/><rect x="93" y="275" width="10" height="3" fill="#305a90"/><rect x="93" y="275" width="9" height="2" fill="#d8d0f8"/><rect x="96" y="278" width="10" height="6" fill="#9c94dc"/><rect x="96" y="278" width="9" height="5" fill="#c8c0f4"/><rect x="97" y="279" width="8" height="1" fill="#ece8ff"/><rect x="97" y="282" width="8" height="1" fill="#ece8ff"/><rect x="113" y="270" width="12" height="12" fill="#b4aca4"/><rect x="115" y="271" width="8" height="4" fill="#d8d0d0"/><rect x="116" y="272" width="6" height="1" fill="#c4b8d8"/><rect x="115" y="277" width="3" height="4" fill="#8c847c"/><rect x="120" y="277" width="9" height="7" fill="#c8bcc0"/><rect x="121" y="278" width="3" height="5" fill="#a89cb0"/><rect x="122" y="279" width="1" height="3" fill="#c8bcc0"/><rect x="125" y="278" width="1" height="5" fill="#a89cb0"/><rect x="126" y="280" width="2" height="1" fill="#a89cb0"/><rect x="127" y="278" width="1" height="2" fill="#a89cb0"/><rect x="127" y="281" width="1" height="2" fill="#a89cb0"/></g><path d="M143.5 268.5 L148.5 275 H145.5 V283.5 H141.5 V275 H138.5 Z" fill="#a8a0b0"/><path d="M166.5 283.5 L171.5 277 H168.5 V268.5 H164.5 V277 H161.5 Z" fill="#a8a0b0"/><g shape-rendering="crispEdges"><rect x="186" y="270" width="8" height="4" fill="#9c94dc"/><rect x="186" y="270" width="7" height="3" fill="#c8c0f4"/><rect x="187" y="271" width="6" height="1" fill="#ece8ff"/><rect x="185" y="274" width="8" height="3" fill="#305a90"/><rect x="185" y="274" width="7" height="2" fill="#d8d0f8"/><rect x="186" y="277" width="8" height="3" fill="#9c94dc"/><rect x="186" y="277" width="7" height="2" fill="#c8c0f4"/><rect x="187" y="278" width="6" height="1" fill="#ece8ff"/><rect x="186" y="280" width="8" height="4" fill="#9c94dc"/><rect x="186" y="280" width="7" height="3" fill="#c8c0f4"/><rect x="187" y="281" width="6" height="1" fill="#ece8ff"/><rect x="183" y="269" width="2" height="13" fill="#20208c"/><rect x="209" y="270" width="8" height="4" fill="#9c94dc"/><rect x="209" y="270" width="7" height="3" fill="#c8c0f4"/><rect x="210" y="271" width="6" height="1" fill="#ece8ff"/><rect x="208" y="274" width="8" height="3" fill="#305a90"/><rect x="208" y="274" width="7" height="2" fill="#d8d0f8"/><rect x="209" y="277" width="8" height="3" fill="#9c94dc"/><rect x="209" y="277" width="7" height="2" fill="#c8c0f4"/><rect x="210" y="278" width="6" height="1" fill="#ece8ff"/><rect x="209" y="280" width="8" height="4" fill="#9c94dc"/><rect x="209" y="280" width="7" height="3" fill="#c8c0f4"/><rect x="210" y="281" width="6" height="1" fill="#ece8ff"/><rect x="206" y="269" width="2" height="13" fill="#20208c"/></g><path d="M181.5 280 H186.5 L184 284 Z" fill="#20208c"/><path d="M204.5 280 H209.5 L207 284 Z" fill="#20208c"/><g fill="#20208c" shape-rendering="crispEdges"><rect x="195" y="270" width="1" height="1"/><rect x="196" y="270" width="1" height="1"/><rect x="194" y="271" width="1" height="1"/><rect x="197" y="271" width="1" height="1"/><rect x="194" y="272" width="1" height="1"/><rect x="197" y="272" width="1" height="1"/><rect x="194" y="273" width="1" height="1"/><rect x="195" y="273" width="1" height="1"/><rect x="196" y="273" width="1" height="1"/><rect x="197" y="273" width="1" height="1"/><rect x="194" y="274" width="1" height="1"/><rect x="197" y="274" width="1" height="1"/><rect x="194" y="275" width="1" height="1"/><rect x="197" y="275" width="1" height="1"/></g><g fill="#d01010" shape-rendering="crispEdges"><rect x="194" y="277" width="1" height="1"/><rect x="195" y="277" width="1" height="1"/><rect x="196" y="277" width="1" height="1"/><rect x="197" y="277" width="1" height="1"/><rect x="197" y="278" width="1" height="1"/><rect x="196" y="279" width="1" height="1"/><rect x="195" y="280" width="1" height="1"/><rect x="194" y="281" width="1" height="1"/><rect x="194" y="282" width="1" height="1"/><rect x="195" y="282" width="1" height="1"/><rect x="196" y="282" width="1" height="1"/><rect x="197" y="282" width="1" height="1"/></g><g fill="#d01010" shape-rendering="crispEdges"><rect x="217" y="270" width="1" height="1"/><rect x="218" y="270" width="1" height="1"/><rect x="219" y="270" width="1" height="1"/><rect x="220" y="270" width="1" height="1"/><rect x="220" y="271" width="1" height="1"/><rect x="219" y="272" width="1" height="1"/><rect x="218" y="273" width="1" height="1"/><rect x="217" y="274" width="1" height="1"/><rect x="217" y="275" width="1" height="1"/><rect x="218" y="275" width="1" height="1"/><rect x="219" y="275" width="1" height="1"/><rect x="220" y="275" width="1" height="1"/></g><g fill="#20208c" shape-rendering="crispEdges"><rect x="218" y="277" width="1" height="1"/><rect x="219" y="277" width="1" height="1"/><rect x="217" y="278" width="1" height="1"/><rect x="220" y="278" width="1" height="1"/><rect x="217" y="279" width="1" height="1"/><rect x="220" y="279" width="1" height="1"/><rect x="217" y="280" width="1" height="1"/><rect x="218" y="280" width="1" height="1"/><rect x="219" y="280" width="1" height="1"/><rect x="220" y="280" width="1" height="1"/><rect x="217" y="281" width="1" height="1"/><rect x="220" y="281" width="1" height="1"/><rect x="217" y="282" width="1" height="1"/><rect x="220" y="282" width="1" height="1"/></g><g fill="#f8d800" shape-rendering="crispEdges"><rect x="24" y="268" width="1" height="1"/><rect x="22" y="269" width="1" height="1"/><rect x="23" y="269" width="1" height="1"/><rect x="24" y="269" width="1" height="1"/><rect x="25" y="269" width="1" height="1"/><rect x="26" y="269" width="1" height="1"/><rect x="22" y="270" width="1" height="1"/><rect x="23" y="270" width="1" height="1"/><rect x="24" y="270" width="1" height="1"/><rect x="25" y="270" width="1" height="1"/><rect x="26" y="270" width="1" height="1"/><rect x="21" y="271" width="1" height="1"/><rect x="22" y="271" width="1" height="1"/><rect x="23" y="271" width="1" height="1"/><rect x="24" y="271" width="1" height="1"/><rect x="25" y="271" width="1" height="1"/><rect x="26" y="271" width="1" height="1"/><rect x="27" y="271" width="1" height="1"/><rect x="22" y="272" width="1" height="1"/><rect x="23" y="272" width="1" height="1"/><rect x="24" y="272" width="1" height="1"/><rect x="25" y="272" width="1" height="1"/><rect x="26" y="272" width="1" height="1"/><rect x="22" y="273" width="1" height="1"/><rect x="23" y="273" width="1" height="1"/><rect x="24" y="273" width="1" height="1"/><rect x="25" y="273" width="1" height="1"/><rect x="26" y="273" width="1" height="1"/><rect x="24" y="274" width="1" height="1"/></g><rect x="23" y="270" width="3" height="3" fill="#fff8b0" shape-rendering="crispEdges"/><rect x="24" y="271" width="1" height="1" fill="#fff" shape-rendering="crispEdges"/><path d="M90.8 268.8 L96.2 274.2 M96.2 268.8 L90.8 274.2" stroke="#e03010" stroke-width="1.7"/><path d="M75 276 L81.5 282.5" stroke="#203000" stroke-width="3.6"/><path d="M75 276 L81.5 282.5" stroke="#30b030" stroke-width="2.4"/><path d="M74.5 275.5 L76 277 M81 282 L82.5 283.5" stroke="#f0e020" stroke-width="2.6"/><g fill="#000" shape-rendering="crispEdges"><rect x="734" y="131" width="1" height="1"/><rect x="733" y="132" width="1" height="1"/><rect x="735" y="132" width="1" height="1"/><rect x="732" y="133" width="1" height="1"/><rect x="736" y="133" width="1" height="1"/><rect x="731" y="134" width="1" height="1"/><rect x="737" y="134" width="1" height="1"/></g><g fill="#000" shape-rendering="crispEdges"><rect x="731" y="330" width="1" height="1"/><rect x="737" y="330" width="1" height="1"/><rect x="732" y="331" width="1" height="1"/><rect x="736" y="331" width="1" height="1"/><rect x="733" y="332" width="1" height="1"/><rect x="735" y="332" width="1" height="1"/><rect x="734" y="333" width="1" height="1"/></g><g fill="#000" shape-rendering="crispEdges"><rect x="18" y="341" width="1" height="1"/><rect x="17" y="342" width="1" height="1"/><rect x="16" y="343" width="1" height="1"/><rect x="15" y="344" width="1" height="1"/><rect x="16" y="345" width="1" height="1"/><rect x="17" y="346" width="1" height="1"/><rect x="18" y="347" width="1" height="1"/></g><g fill="#000" shape-rendering="crispEdges"><rect x="720" y="341" width="1" height="1"/><rect x="721" y="342" width="1" height="1"/><rect x="722" y="343" width="1" height="1"/><rect x="723" y="344" width="1" height="1"/><rect x="722" y="345" width="1" height="1"/><rect x="721" y="346" width="1" height="1"/><rect x="720" y="347" width="1" height="1"/></g><g fill="#000" shape-rendering="crispEdges"><rect x="12" y="435" width="1" height="1"/><rect x="11" y="436" width="1" height="1"/><rect x="10" y="437" width="1" height="1"/><rect x="9" y="438" width="1" height="1"/><rect x="10" y="439" width="1" height="1"/><rect x="11" y="440" width="1" height="1"/><rect x="12" y="441" width="1" height="1"/></g><g fill="#000" shape-rendering="crispEdges"><rect x="736" y="435" width="1" height="1"/><rect x="737" y="436" width="1" height="1"/><rect x="738" y="437" width="1" height="1"/><rect x="739" y="438" width="1" height="1"/><rect x="738" y="439" width="1" height="1"/><rect x="737" y="440" width="1" height="1"/><rect x="736" y="441" width="1" height="1"/></g><path d="M25 281 L25.5 299 L30.5 296 L34.5 306.5 L37.5 305 L34.3 296 L41 295.5 Z" fill="#000" opacity="0.18"/><defs><linearGradient id="cg" x1="0" y1="0" x2="1" y2="0.3"><stop offset="0" stop-color="#f0f0f0"/><stop offset="1" stop-color="#707070"/></linearGradient></defs><path d="M24 278.5 L24.5 296.5 L29.5 293.5 L33.5 304 L36.5 302.5 L33.3 293.3 L40 293 Z" fill="url(#cg)" stroke="#383838" stroke-width="1"/>
</svg>
</body></html>
